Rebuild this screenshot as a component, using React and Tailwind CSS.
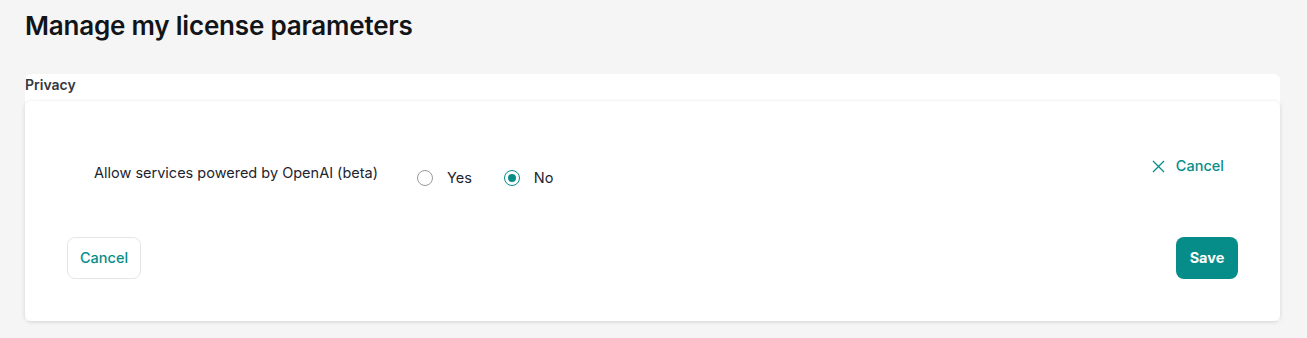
export default function App() {
  const font = { fontFamily: 'Inter, "Noto Sans", sans-serif' };
  return (
    <div className="min-h-[338px] w-full bg-[#f4f5f4] pl-[25px] pr-[27px] pt-[10px] pb-[16px]" style={font}>
      <h1 className="text-[26px] leading-[32px] font-semibold text-[#111418] tracking-[-0.2px]">
        Manage my license parameters
      </h1>
      <div className="mt-[32px] rounded-t-md bg-white">
        <div className="h-[27px] pt-[1px] text-[14px] leading-[20px] font-semibold text-[#333940]">Privacy</div>
        <div className="rounded-md bg-white px-[42px] pt-[54px] pb-[42px] shadow-[0_1px_4px_rgba(0,0,0,0.14)]">
          <div className="flex items-start justify-between">
            <div className="flex items-start pl-[27px] pt-[8px]">
              <span className="text-[14.5px] leading-[20px] text-[#1d2430]">
                Allow services powered by OpenAI (beta)
              </span>
              <div className="ml-[39px] mt-[5px] flex items-center">
                <label className="flex items-center">
                  <span className="h-4 w-4 rounded-full border border-[#9a9a9a] bg-white" />
                  <span className="ml-[14px] text-[14.5px] leading-[20px] text-[#1d2430]">Yes</span>
                </label>
                <label className="ml-[32px] flex items-center">
                  <span className="flex h-4 w-4 items-center justify-center rounded-full border border-[#078d89] bg-white">
                    <span className="h-2 w-2 rounded-full bg-[#078d89]" />
                  </span>
                  <span className="ml-[14px] text-[14.5px] leading-[20px] text-[#1d2430]">No</span>
                </label>
              </div>
            </div>
            <button className="mt-[1px] mr-[14px] flex items-center text-[14.5px] leading-[20px] font-medium text-[#078d89]">
              <svg width="13" height="13" viewBox="0 0 13 13" fill="none" stroke="#078d89" strokeWidth="1.3">
                <path d="M1 1L12 12M12 1L1 12" />
              </svg>
              <span className="ml-[11px]">Cancel</span>
            </button>
          </div>
          <div className="mt-[49px] flex items-center justify-between">
            <button className="h-[42px] w-[74px] rounded-lg border border-[#e3e5e6] bg-white text-[14.5px] font-medium text-[#078d89]">
              Cancel
            </button>
            <button className="h-[42px] w-[62px] rounded-lg bg-[#078d89] text-[14.5px] font-bold text-white">
              Save
            </button>
          </div>
        </div>
      </div>
    </div>
  );
}
